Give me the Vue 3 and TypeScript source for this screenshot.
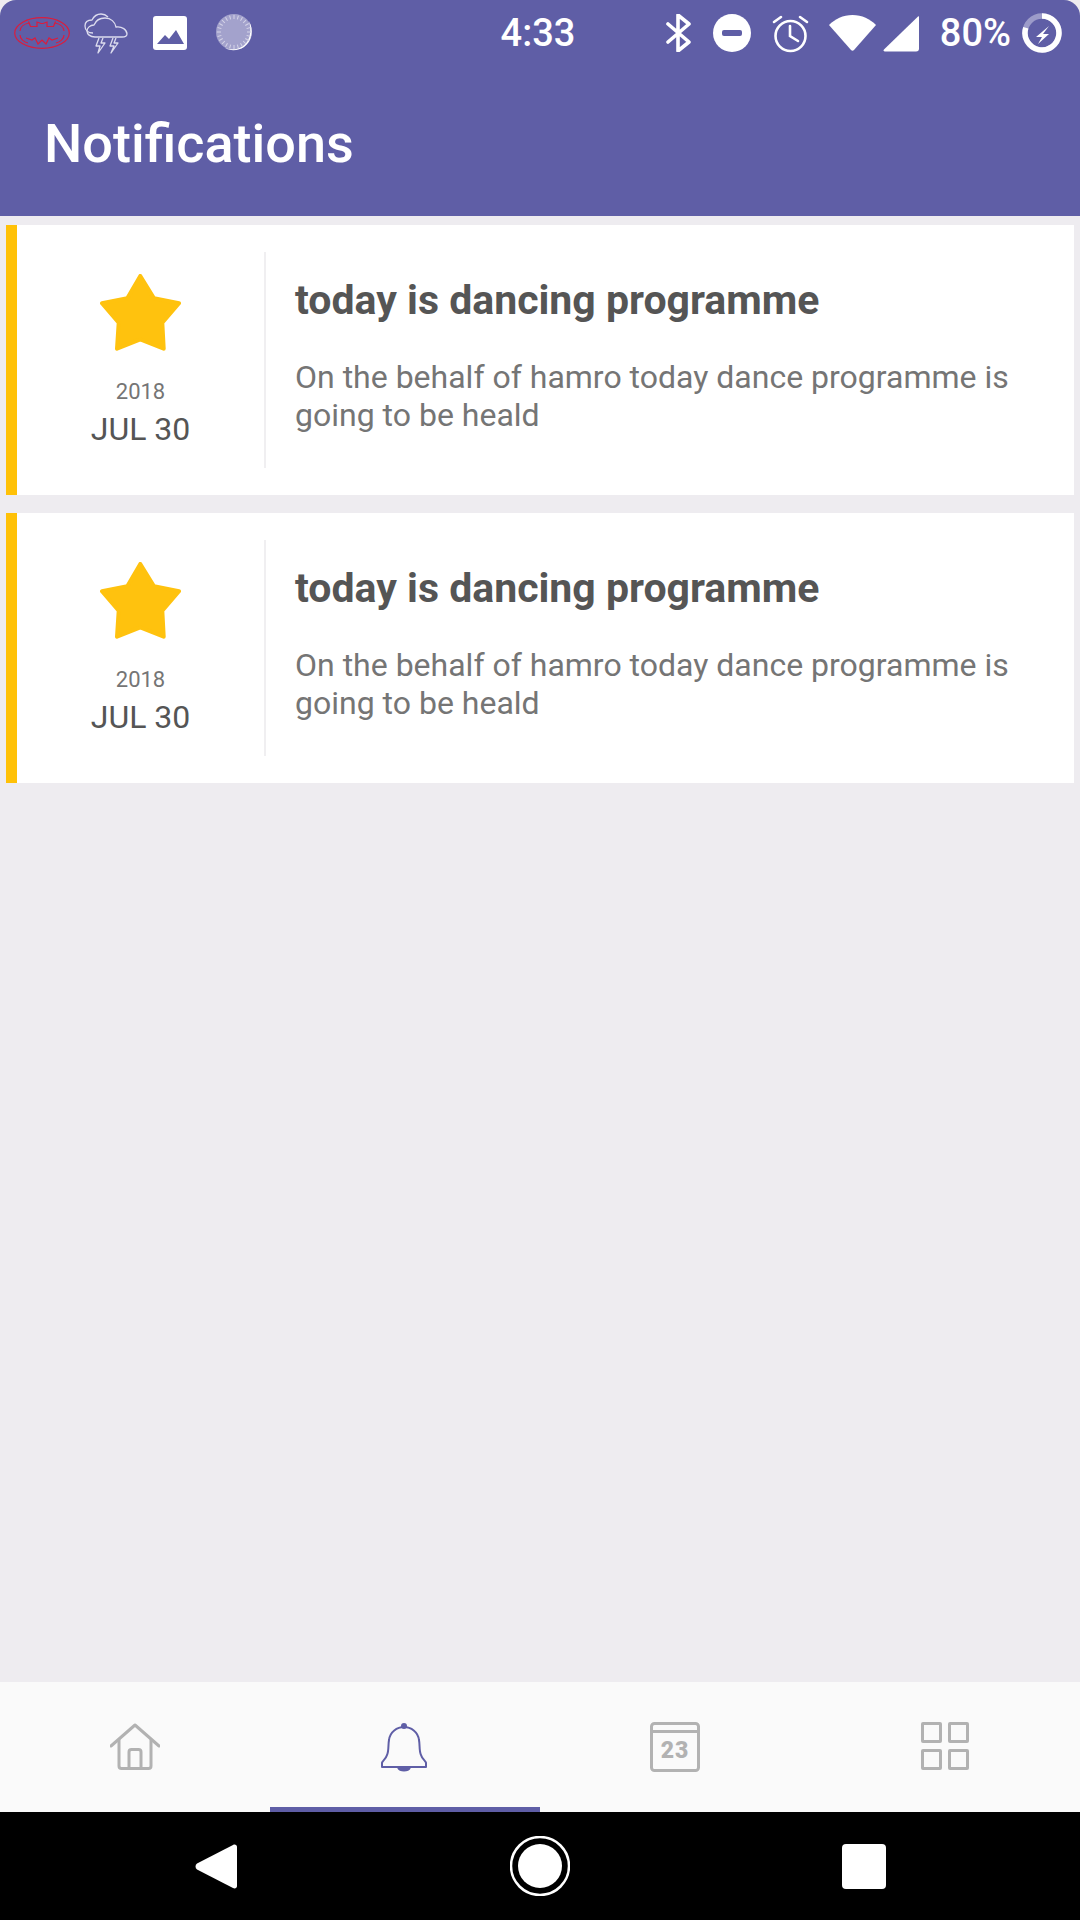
<script setup lang="ts">
interface Notice {
  id: number
  year: string
  date: string
  title: string
  body: string
}

const notices: Notice[] = [
  { id: 1, year: '2018', date: 'JUL 30', title: 'today is dancing programme', body: 'On the behalf of hamro today dance programme is going to be heald' },
  { id: 2, year: '2018', date: 'JUL 30', title: 'today is dancing programme', body: 'On the behalf of hamro today dance programme is going to be heald' },
]

// loading dial ticks in the status bar
const ticks = Array.from({ length: 24 }, (_, i) => i * 15)
</script>

<template>
  <div class="screen">
    <div class="top">
      <div class="status">
        <div class="status-left">
          <svg class="bat" width="56" height="32" viewBox="0 0 56 32" fill="none" stroke="#dc1c3c" stroke-width="1.200">
            <ellipse cx="28" cy="16" rx="27.300" ry="15.300" />
            <path d="M14.500 4.500l2 5h6.500V5l4 1.500h2L33 5v4.500h6.500l2-5" />
            <path d="M6 14c0-4 4-7 9-8M50 14c0-4-4-7-9-8M6 18c0 4 4 7 8 8M50 18c0 4-4 7-8 8" />
            <path d="M12 21l6 2 3-2 3 6 4-4 4 4 3-6 3 2 6-2" />
          </svg>
          <svg class="cloud" width="44" height="42" viewBox="0 0 44 42" fill="none" stroke="#dcdcee" stroke-width="1.300" stroke-linejoin="round">
            <path d="M9 21c-5 0-8-3-8-7s3-6 7-6c2-4 5-6 9-6 3 0 5 1 7 3" />
            <path d="M11 25c-5 0-8-3-8-6s3-6 7-6c2-5 7-7 11-7 6 0 10 4 11 9 6-1 11 3 11 7 0 2-2 3-5 3z" />
            <path d="M15 26l-3 8h4l-2 7 7-10h-4l2-5M29 26l-3 8h4l-3 7 7-10h-4l2-5" />
          </svg>
          <svg class="pic" width="34" height="34" viewBox="0 0 34 34">
            <rect width="34" height="34" rx="3" fill="#fff" />
            <path d="M4 28l8-9 4 4 7-9 8 14z" fill="#5f5ea6" />
          </svg>
          <svg class="dial" width="38" height="38" viewBox="0 0 38 38">
            <circle cx="18" cy="18" r="18" fill="#a3a2cc" />
            <path d="M33 7c5 9 3 20-5 26-6 4-14 4-19 1 8 3 17 1 22-6 4-6 4-14 2-21z" fill="#fff" />
            <line v-for="t in ticks" :key="t" x1="18" y1="1" x2="18" y2="5" stroke="#d5d4e8" stroke-width="1" :transform="`rotate(${t} 18 18)`" />
          </svg>
        </div>
        <div class="clock">4:33</div>
        <div class="status-right">
          <svg class="bt" width="25" height="38" viewBox="0 0 25 38" fill="none" stroke="#fff" stroke-width="3.600" stroke-linecap="round" stroke-linejoin="round">
            <path d="M2 10l21 18-11 9V1l11 9L2 28" />
          </svg>
          <svg class="dnd" width="38" height="38" viewBox="0 0 38 38">
            <circle cx="19" cy="19" r="19" fill="#fff" />
            <rect x="9" y="16" width="20" height="6" rx="2" fill="#5f5ea6" />
          </svg>
          <svg class="alarm" width="37" height="39" viewBox="0 0 37 39" fill="none" stroke="#fff" stroke-width="2.600" stroke-linecap="round">
            <circle cx="18.500" cy="22" r="15" />
            <path d="M18 12v10l8 5M2 8l7-5M35 8l-7-5" />
          </svg>
          <svg class="wifi" width="47" height="37" viewBox="0 0 47 37">
            <path d="M0 10C6 4 14 0 23.500 0S41 4 47 10L25 35c-1 1-2 1-3 0z" fill="#fff" />
          </svg>
          <svg class="signal" width="36" height="37" viewBox="0 0 37 37">
            <path d="M36 1c.6-.5 1-.2 1 .5V34c0 2-1 3-3 3H2c-1.500 0-2-1-1-2z" fill="#fff" />
          </svg>
          <span class="pct">80%</span>
          <svg class="batt" width="40" height="40" viewBox="0 0 40 40" fill="none">
            <circle cx="20" cy="20" r="17" stroke="#9c9bc9" stroke-width="5.500" />
            <path d="M20 3a17 17 0 1 1-16.200 11.750" stroke="#fff" stroke-width="5.500" />
            <path d="M27 13L14 24h6l-4 7 11-10h-6z" fill="#fff" />
          </svg>
        </div>
      </div>
      <div class="appbar">Notifications</div>
    </div>

    <div class="list">
      <article v-for="n in notices" :key="n.id" class="card">
        <div class="when">
          <svg class="star" width="81" height="77" viewBox="0 0 81 77">
            <path d="M40.300 2L54 24.300 79 29.300 62.300 48.700 63.700 74.700 40.300 65.300 17 74.700 18.700 48.700 2 29.300 27.300 24.300z" fill="#ffc20e" stroke="#ffc20e" stroke-width="4" stroke-linejoin="round" />
          </svg>
          <div class="year">{{ n.year }}</div>
          <div class="date">{{ n.date }}</div>
        </div>
        <div class="text">
          <h2 class="title">{{ n.title }}</h2>
          <p class="body">{{ n.body }}</p>
        </div>
      </article>
    </div>

    <nav class="tabs">
      <div class="tab">
        <svg width="50" height="48" viewBox="0 0 50 48" fill="none" stroke="#b2b2b2" stroke-width="3" stroke-linejoin="round" stroke-linecap="round">
          <path d="M1 24L25 3l24 21" />
          <path d="M9 18v26c0 1.500 1 2.500 2.500 2.500h27c1.500 0 2.500-1 2.500-2.500V18" />
          <path d="M19 46V30c0-1.500 1-2.500 2.500-2.500h7c1.500 0 2.500 1 2.500 2.500v16" />
        </svg>
      </div>
      <div class="tab active">
        <svg width="48" height="50" viewBox="1 0 48 50" fill="none" stroke="#5f5ea6" stroke-width="2">
          <path d="M2 45v-4c0-2 4-4 5-8 2-4 1-10 2-15 1-8 8-13 15-13s14 5 15 13c1 5 0 11 2 15 1 4 5 6 5 8v4z" stroke-linejoin="round" />
          <circle cx="24" cy="4" r="3" fill="#5f5ea6" stroke="none" />
          <path d="M17 45.500h14c-1 3-4 4-7 4s-6-1-7-4z" fill="#5f5ea6" stroke="none" />
        </svg>
      </div>
      <div class="tab">
        <svg width="50" height="50" viewBox="0 0 50 50" fill="none" stroke="#b2b2b2" stroke-width="3">
          <rect x="1.500" y="1.500" width="47" height="47" rx="3" />
          <path d="M1.500 9.500h47" />
          <text x="25" y="36" text-anchor="middle" class="cal-num">23</text>
        </svg>
      </div>
      <div class="tab">
        <div class="grid-icon"><i /><i /><i /><i /></div>
      </div>
    </nav>

    <div class="sysnav">
      <svg width="42" height="45" viewBox="0 0 42 45">
        <path d="M38 1L2 19.500c-2 1.500-2 4.500 0 6L38 44c2 1 4 0 4-2V3c0-2-2-3-4-2z" fill="#fff" />
      </svg>
      <svg width="60" height="60" viewBox="0 0 60 60">
        <circle cx="30" cy="30" r="29" fill="none" stroke="#fff" stroke-width="2.500" />
        <circle cx="30" cy="30" r="22" fill="#fff" />
      </svg>
      <svg width="44" height="45" viewBox="0 0 44 45">
        <rect width="44" height="45" rx="4" fill="#fff" />
      </svg>
    </div>
  </div>
</template>

<style scoped>
.screen {
  width: 1080px;
  height: 1920px;
  display: flex;
  flex-direction: column;
  background: #eeecf0;
  font-family: Roboto, "Liberation Sans", sans-serif;
  overflow: hidden;
}

.top {
  height: 216px;
  background: #5f5ea6;
  border-radius: 16px 16px 0 0;
  color: #fff;
}

.status {
  height: 66px;
  display: grid;
  grid-template-columns: 1fr auto 1fr;
  align-items: center;
  padding: 0 18px 0 14px;
}
.status-left,
.status-right {
  display: flex;
  align-items: center;
}
.status-right {
  justify-content: flex-end;
}
.bat { margin-right: 14px; }
.cloud { margin-right: 25px; }
.pic { margin-right: 29px; }
.clock {
  font-size: 38px;
  font-weight: 500;
}
.bt { margin-right: 22px; }
.dnd { margin-right: 21px; }
.alarm { margin-right: 20px; }
.wifi { margin-right: 7px; }
.signal { margin-right: 21px; }
.pct {
  font-size: 38px;
  font-weight: 500;
  margin-right: 11px;
}

.appbar {
  padding: 48px 0 0 44px;
  font-size: 54px;
  font-weight: 500;
  line-height: 60px;
}

.list {
  flex: 1;
  padding: 9px 6px 0;
  display: flex;
  flex-direction: column;
  gap: 18px;
}
.card {
  height: 270px;
  display: flex;
  align-items: flex-start;
  background: #fff;
  border-left: 11px solid #ffc107;
  box-sizing: border-box;
}
.when {
  width: 247px;
  height: 216px;
  margin-top: 27px;
  border-right: 2px solid #f0eff1;
  display: flex;
  flex-direction: column;
  align-items: center;
  box-sizing: content-box;
}
.star {
  margin-top: 22px;
}
.year {
  margin-top: 28px;
  font-size: 22px;
  line-height: 26px;
  color: #757575;
}
.date {
  margin-top: 5px;
  font-size: 32px;
  line-height: 38px;
  color: #555;
}
.text {
  padding: 52px 0 0 29px;
}
.title {
  margin: 0;
  font-size: 41px;
  font-weight: 700;
  line-height: 46px;
  color: #555;
}
.body {
  margin: 35px 0 0;
  width: 740px;
  font-size: 32px;
  line-height: 38px;
  color: #757575;
}

.tabs {
  height: 130px;
  display: grid;
  grid-template-columns: repeat(4, 270px);
  background: #fafafa;
}
.tab {
  display: flex;
  justify-content: center;
  padding-top: 40px;
  box-sizing: border-box;
}
.tab.active {
  border-bottom: 5px solid #5f5ea6;
}
.cal-num {
  font-family: Roboto, sans-serif;
  font-size: 23px;
  font-weight: 900;
  letter-spacing: 1px;
  fill: #b2b2b2;
  stroke: none;
}
.grid-icon {
  width: 48px;
  height: 48px;
  display: grid;
  grid-template-columns: 21px 21px;
  grid-template-rows: 21px 21px;
  gap: 6px;
}
.grid-icon i {
  border: 3px solid #b2b2b2;
  border-radius: 2px;
  box-sizing: border-box;
}

.sysnav {
  height: 108px;
  background: #000;
  display: grid;
  grid-template-columns: repeat(3, 324px);
  justify-content: center;
  justify-items: center;
  align-items: center;
}
</style>

<style>
html, body {
  background: #000;
}
</style>
